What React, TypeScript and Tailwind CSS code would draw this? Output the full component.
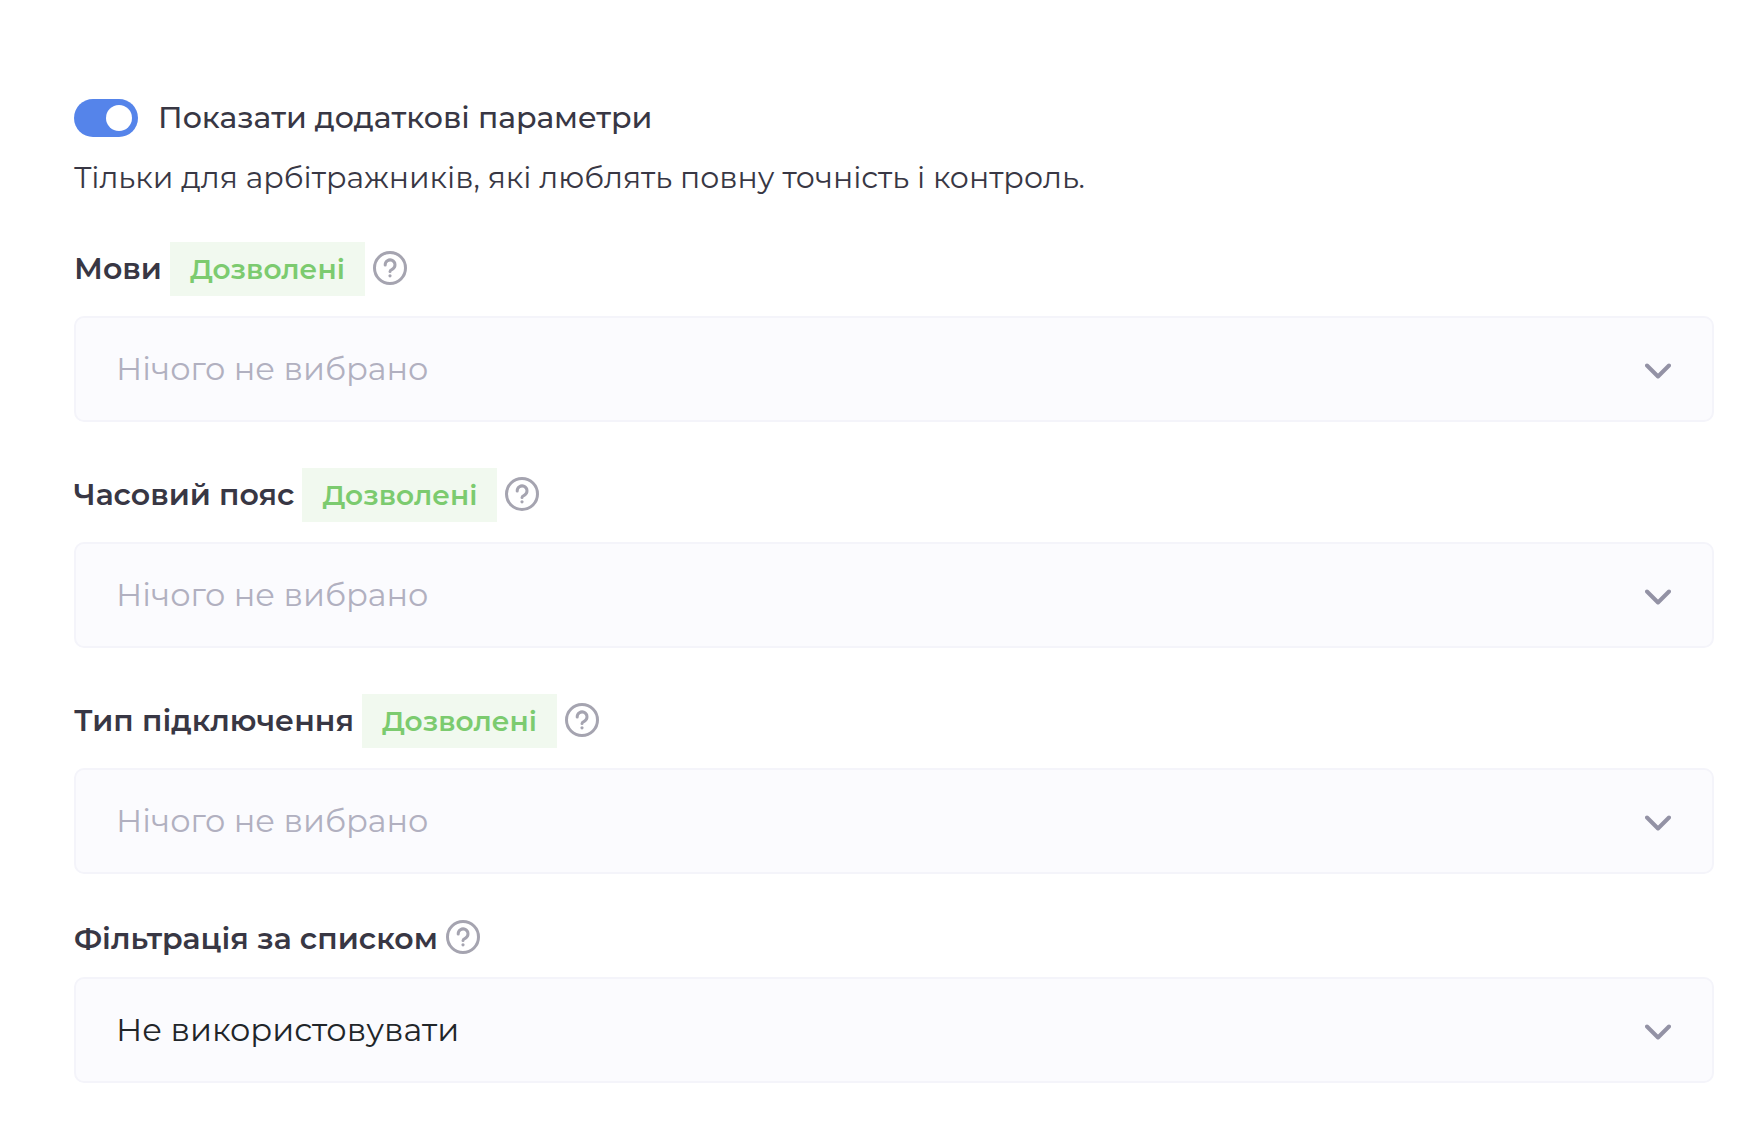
import { useState } from 'react';

interface Field {
  id: string;
  label: string;
  badge?: string;
  placeholder?: string;
  options: string[];
}

const fields: Field[] = [
  {
    id: 'languages',
    label: 'Мови',
    badge: 'Дозволені',
    placeholder: 'Нічого не вибрано',
    options: ['Українська', 'English', 'Polski'],
  },
  {
    id: 'timezone',
    label: 'Часовий пояс',
    badge: 'Дозволені',
    placeholder: 'Нічого не вибрано',
    options: ['UTC+0', 'UTC+2', 'UTC+3'],
  },
  {
    id: 'connection',
    label: 'Тип підключення',
    badge: 'Дозволені',
    placeholder: 'Нічого не вибрано',
    options: ['Wi-Fi', 'Мобільне'],
  },
  {
    id: 'list-filter',
    label: 'Фільтрація за списком',
    options: ['Не використовувати', 'Використовувати'],
  },
];

const HelpIcon = () => (
  <svg viewBox="0 0 34 34" fill="none" stroke="currentColor" className="size-[34px]" aria-hidden="true">
    <circle cx="17" cy="17" r="15.5" strokeWidth="3" />
    <path
      d="M12.2 14.1a4.9 4.9 0 1 1 7.6 3.8c-1.7.9-2.8 1.4-2.8 2.6"
      strokeWidth="3"
      strokeLinecap="round"
    />
    <circle cx="17" cy="24.8" r="1.6" fill="currentColor" stroke="none" />
  </svg>
);

const SelectField = ({ field }: { field: Field }) => {
  const [value, setValue] = useState(field.placeholder ? '' : field.options[0]);

  return (
    <div className="flex flex-col gap-5">
      <div className="flex items-center gap-2">
        <label htmlFor={field.id} className="text-[30px] leading-9 font-semibold">
          {field.label}
        </label>
        {field.badge && (
          <button
            type="button"
            className="h-[54px] bg-[#f1f9ef] px-5 text-[28px] leading-9 font-semibold text-[#7ccb6f]"
          >
            {field.badge}
          </button>
        )}
        <button type="button" aria-label={`Довідка: ${field.label}`} className="pb-[3px] text-[#a5a4b0]">
          <HelpIcon />
        </button>
      </div>

      <div className="grid items-center">
        <select
          id={field.id}
          value={value}
          onChange={(e) => setValue(e.target.value)}
          className={`col-start-1 row-start-1 h-[106px] w-full appearance-none rounded-[10px] border-2 border-[#f4f4fa] bg-[#fbfbfe] px-10 text-[32px] ${
            value ? 'text-[#212529]' : 'text-[#b1b0c0]'
          }`}
        >
          {field.placeholder && <option value="">{field.placeholder}</option>}
          {field.options.map((option) => (
            <option key={option} value={option}>
              {option}
            </option>
          ))}
        </select>
        <svg
          viewBox="0 0 26 16"
          fill="none"
          stroke="#9392a5"
          strokeWidth="4"
          strokeLinecap="round"
          strokeLinejoin="round"
          className="pointer-events-none col-start-1 row-start-1 mt-1 mr-[43px] h-4 w-[26px] justify-self-end"
          aria-hidden="true"
        >
          <path d="M2 2.5l11 11L24 2.5" />
        </svg>
      </div>
    </div>
  );
};

const App = () => {
  const [showExtra, setShowExtra] = useState(true);

  return (
    <main className="min-h-screen bg-white pt-[99px] pr-[42px] pb-14 pl-[74px] font-['Montserrat','Inter',sans-serif] text-[#383744]">
      <label className="flex items-center gap-5">
        <input
          type="checkbox"
          role="switch"
          checked={showExtra}
          onChange={(e) => setShowExtra(e.target.checked)}
          className="flex h-[38px] w-16 shrink-0 appearance-none items-center rounded-full bg-[#c9c9d3] px-1.5 before:size-[26px] before:rounded-full before:bg-white before:content-[''] checked:justify-end checked:bg-[#5584ea]"
        />
        <span className="text-[30px] leading-9 font-medium">Показати додаткові параметри</span>
      </label>

      <p className="mt-[23px] text-[30px] leading-9">
        Тільки для арбітражників, які люблять повну точність і контроль.
      </p>

      {showExtra && (
        <div className="mt-[46px] flex flex-col gap-[46px]">
          {fields.map((field) => (
            <SelectField key={field.id} field={field} />
          ))}
        </div>
      )}
    </main>
  );
};

export default App;
